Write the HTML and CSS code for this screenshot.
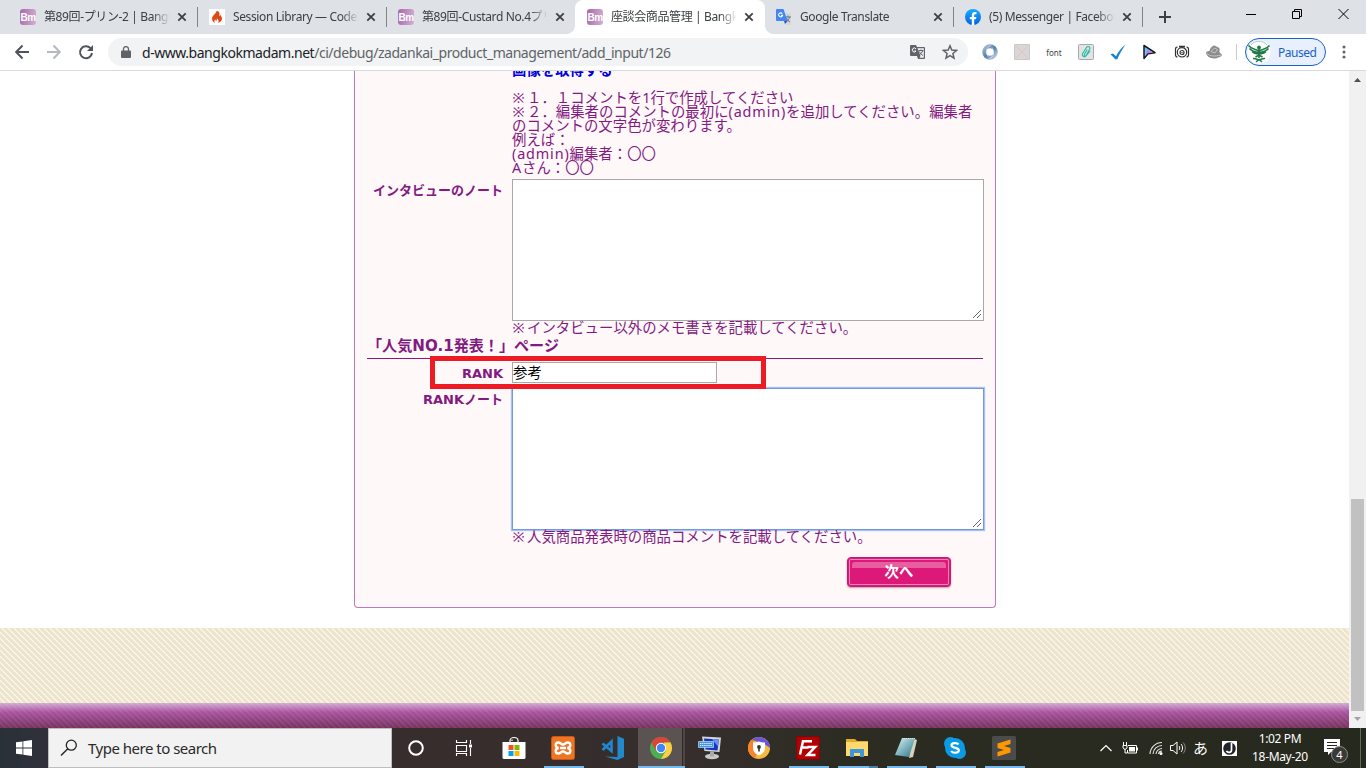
FILE: index.html
```html
<!DOCTYPE html>
<html lang="ja">
<head>
<meta charset="utf-8">
<title>座談会商品管理 | Bangkok Madam</title>
<link rel="stylesheet" href="styles.css">
</head>
<body>
<svg width="0" height="0" class="defs" aria-hidden="true">
  <defs>
    <linearGradient id="ring" x1="0" y1="0" x2="1" y2="1"><stop offset="0" stop-color="#a5bcd4"/><stop offset=".5" stop-color="#5480ac"/><stop offset="1" stop-color="#c3d2e2"/></linearGradient>
    <linearGradient id="fb" x1="0" y1="0" x2="0" y2="1"><stop offset="0" stop-color="#18acfe"/><stop offset="1" stop-color="#0163e0"/></linearGradient>
    <linearGradient id="pad" x1="0" y1="0" x2="1" y2="1"><stop offset="0" stop-color="#e2f4f7"/><stop offset=".5" stop-color="#7fb5c1"/><stop offset="1" stop-color="#317483"/></linearGradient>
    <symbol id="x" viewBox="0 0 10 10"><path d="M1.3 1.3l7.4 7.4M8.7 1.3L1.3 8.7" stroke="#3c4043" stroke-width="1.8"/></symbol>
  </defs>
</svg>

<header class="tabs">
  <div class="tab"><span class="fav bm">Bm</span><span class="title t1">第89回-プリン-2 | Bangkok</span><svg class="close"><use href="#x"/></svg></div>
  <div class="tab"><svg class="fav" viewBox="0 0 16 16"><path fill="#fff" d="M0 0h16v16H0z"/><path fill="#dd4814" d="M7.4 1.7c.6 2.4-3.9 4.200-4.300 7.500-.3 2.200 1.200 4 3.300 4.600-1.300-1-1.300-2.500-.1-3.500-.1 1 .3 1.400.9 1.500.9-.3.700-1.500.5-2.300 1.900.8 2.600 3 1.100 4.300 2.700-.6 4.300-2.200 4.200-4.300-.1-1.900-1.600-2.900-2-4.600-.3.800-.2 1.500 0 2.300-1.200-.4-.7-1.500-.5-2.500.2-1.500-1.200-2.700-3.100-3z"/></svg><span class="title t2">Session Library — CodeIgniter</span><svg class="close"><use href="#x"/></svg></div>
  <div class="tab"><span class="fav bm">Bm</span><span class="title t3">第89回-Custard No.4プリン</span><svg class="close"><use href="#x"/></svg></div>
  <div class="tab active"><span class="fav bm">Bm</span><span class="title t4">座談会商品管理 | Bangkok</span><svg class="close"><use href="#x"/></svg></div>
  <div class="tab"><svg class="fav" viewBox="0 0 16 16"><path fill="#d5d8dc" d="M6 4h9v12H9z"/><path d="M9 8h6M12 6.500v1.500M10 13c2-1 3-3 3.500-5M10.500 9c.7 2 2 3 3.500 4" stroke="#667380" fill="none"/><path fill="#4285f4" d="M1 0h6.500l4 12H1a1 1 0 0 1-1-1V1a1 1 0 0 1 1-1z"/><path fill="#3350c0" d="M8 12h3.500L9 15z"/><path d="M6.300 4.700A2 2 0 1 0 6.600 6.300H4.900" stroke="#fff" fill="none" stroke-width="1.100"/></svg><span class="title t5">Google Translate</span><svg class="close"><use href="#x"/></svg></div>
  <div class="tab"><svg class="fav" viewBox="0 0 16 16"><circle cx="8" cy="8" r="8" fill="url(#fb)"/><path fill="#fff" d="M6.800 15.900V10.300H4.800V8h2V6.200c0-2 1.200-3.100 3-3.100l1.700.1v2h-1c-1 0-1.300.6-1.300 1.200V8h2.200l-.4 2.300H9.200v5.600z"/></svg><span class="title t6">(5) Messenger | Facebook</span><svg class="close"><use href="#x"/></svg></div>
  <svg class="plus" viewBox="0 0 14 14"><path d="M7 1v12M1 7h12" stroke="#3c4043" stroke-width="2"/></svg>
  <svg class="winctl" viewBox="0 0 112 16"><g fill="none" stroke="#000"><path d="M6 8.500h10M52.500 5.500h7v7h-7zM54.500 5.500v-2h7v7h-2M98.500 3l10 10M108.500 3l-10 10"/></g></svg>
</header>

<div class="toolbar">
  <svg class="nav" viewBox="0 0 84 18"><g fill="none" stroke-width="2"><path stroke="#50545a" d="M14 9H1.500M7.500 2.500L1.200 9l6.300 6.500"/><path stroke="#b6b9bd" d="M32 9h12.500M38.500 2.500L44.800 9l-6.300 6.500"/><path stroke="#50545a" d="M75.500 5.200A6 6 0 1 0 77 10"/></g><path fill="#50545a" d="M78 2v6h-6z"/></svg>
  <div class="omni">
    <svg class="lock" viewBox="0 0 10 12"><path fill="#5f6368" d="M1 4.500h8a1 1 0 0 1 1 1V11a1 1 0 0 1-1 1H1a1 1 0 0 1-1-1V5.500a1 1 0 0 1 1-1z"/><path d="M2.500 5V3a2.500 2.400 0 0 1 5 0v2" fill="none" stroke="#5f6368" stroke-width="1.300"/></svg>
    <span class="url"><b>d-www.bangkokmadam.net</b>/ci/debug/zadankai_product_management/add_input/126</span>
    <svg class="trans" viewBox="0 0 15 14"><path fill="#606368" d="M1 0h5l1 2h7a1 1 0 0 1 1 1v10a1 1 0 0 1-1 1H8l-1-3H1a1 1 0 0 1-1-1V1a1 1 0 0 1 1-1z"/><path fill="#f1f3f4" d="M7.500 3.200h6.300v9.600H9.500l1-1.800z"/><path d="M6 4A2 2 0 1 0 6 6H4.300" stroke="#fff" fill="none"/><path d="M8.500 5.500h5M11 4.500v1M9 10c2-1 3-2.500 3.500-4M9.500 6.500c.7 2 2 3 3.500 4" stroke="#606368" fill="none"/></svg>
    <svg class="star" viewBox="0 0 16 16"><path d="M8 1.800l1.800 4.300 4.700.4-3.600 3 1.100 4.600-4-2.500-4 2.500 1.100-4.600-3.600-3 4.700-.4z" fill="none" stroke="#5f6368" stroke-width="1.500"/></svg>
  </div>
  <div class="exts">
    <svg viewBox="0 0 16 16"><circle cx="8" cy="8" r="5.800" fill="none" stroke="url(#ring)" stroke-width="4"/><path d="M9 1.500c-5 1-6 7-3 11M7 14.500c5-1 6-7 3-11" fill="none" stroke="#e0e8f0" stroke-width=".7"/></svg>
    <svg viewBox="0 0 16 16"><path fill="#d7d7d7" stroke="#c8c8c8" d="M.5.500h15v15H.500z"/><path d="M2 2l12 12M14 2L2 14" stroke="#eeb9b5" stroke-width=".8"/></svg>
    <span class="fonttxt">font</span>
    <svg viewBox="0 0 16 16"><rect x=".5" y=".5" width="15" height="15" rx="1" fill="#e3e3e3" stroke="#a9a9a9"/><path d="M4.600 9.500L8.500 3.500c1.300-2 4.300-.5 3.200 1.600L8.300 11.200c-.9 1.500-2.600.5-1.900-.9L9.200 5.500M4.600 9.500c-1.200 2.300 1.600 4.400 3.600 2.200L12.200 7" fill="none" stroke="#1fbfa5" stroke-width="1.100"/></svg>
    <svg viewBox="0 0 16 16"><path fill="#1684cf" d="M.5 10.200L3 9.500l3 2.700C8.500 7.500 11.500 3.500 15.500.700 12.500 5 9.500 9.500 7.300 15.300H5.200z"/></svg>
    <svg viewBox="0 0 16 16"><path d="M2 1.500v13L6 9.700l7-1z" fill="#65cdf5" stroke="#17171d" stroke-width="1.500" stroke-linejoin="round"/><path d="M5 5.500l6 3.200-5.500.5-2.500 3z" fill="#c47bea"/></svg>
    <svg viewBox="0 0 16 16"><g fill="none" stroke="#333" stroke-width="1.200"><path d="M3.500 3C1.500 3 1.500 4.200 1.500 5.200v5.600c0 1.500.5 2.200 2 2.200M12.500 3c2 0 2 1.200 2 2.200v5.600c0 1.500-.5 2.200-2 2.200"/><circle cx="8" cy="8.300" r="4.700"/><circle cx="8" cy="8.500" r="2"/></g><path fill="#333" d="M5 1.800h6v1.800H5zM7.400 7.900h1.200v1.200H7.400z"/></svg>
    <svg viewBox="0 0 16 16"><path fill="#8c8c8c" d="M0 8.500c1-1.500 3-1.500 3.500-1.500.5-3 3-5.500 5-5.500l4.500 2.200c1 .8.700 2.800.3 4.300l2.700 2.800c0 2-5 3.700-8 3.700-4 0-8-3-8-6z"/><path d="M5 7.500l3.500-3.500 3 1.500-2.500 3.500zM1 9.500c3 3 8 3 14 1.500" fill="none" stroke="#c5c5c5"/></svg>
  </div>
  <i class="divider"></i>
  <div class="profile"><svg viewBox="0 0 24 24"><circle cx="12" cy="12" r="11.500" fill="#fff"/><path d="M4 5c4-5 12-5 16 0" fill="none" stroke="#9cc7ad" stroke-width=".9"/><g fill="none" stroke="#1e7a45" stroke-width="1.500"><path d="M12 11C8 9 4 9 1.500 5.500M12 12.500C8 12 5 11.500 2.500 8.500M12 14c-3 0-5-.5-7-2.500M12 11c4-2 8-2 10.500-5.500M12 12.500c4-.5 7-1 9.500-4M12 14c3 0 5-.5 7-2.500M12 9v9M6 18.500c3-.5 4 1.500 6 1.500s3-2 6-1.500M9 22l3-2.500 3 2.500M8.500 17l3.500-2 3.500 2"/></g><circle cx="12" cy="7.500" r="1.900" fill="#1e7a45"/></svg><span>Paused</span></div>
  <svg class="dots" viewBox="0 0 4 14"><g fill="#5f6368"><circle cx="2" cy="2" r="1.500"/><circle cx="2" cy="7" r="1.500"/><circle cx="2" cy="12" r="1.500"/></g></svg>
</div>

<div class="viewport">
  <main class="page">
    <section class="panel">
      <div class="row first">
        <div class="label"></div>
        <div class="field notes">
          <a class="get">画像を取得する</a>
          <p><span class="kome">※</span>１．１コメントを1行で作成してください</p>
          <p><span class="kome">※</span>２．編集者のコメントの最初に<span class="latin">(admin)</span>を追加してください。編集者</p>
          <p>のコメントの文字色が変わります。</p>
          <p>例えば：</p>
          <p><span class="latin">(admin)</span>編集者：〇〇</p>
          <p><span class="latin">A</span>さん：〇〇</p>
        </div>
      </div>
      <div class="row">
        <div class="label">インタビューのノート</div>
        <div class="field"><div class="area"><svg class="grip" viewBox="0 0 10 10"><path d="M1 9l8-8M5 9l4-4" stroke="#666" fill="none"/></svg></div><p><span class="kome">※</span>インタビュー以外のメモ書きを記載してください。</p></div>
      </div>
      <h2>「人気NO.1発表！」ページ</h2>
      <div class="row rank">
        <div class="label">RANK</div>
        <div class="field"><div class="input">参考</div></div>
        <i class="mark"></i>
      </div>
      <div class="row">
        <div class="label">RANKノート</div>
        <div class="field"><div class="area focus"><svg class="grip" viewBox="0 0 10 10"><path d="M1 9l8-8M5 9l4-4" stroke="#666" fill="none"/></svg></div><p><span class="kome">※</span>人気商品発表時の商品コメントを記載してください。</p></div>
      </div>
      <div class="actions"><div class="btn"><span>次へ</span></div></div>
    </section>
    <div class="stripes"></div>
    <div class="foot"></div>
  </main>
  <aside class="scroll">
    <svg viewBox="0 0 17 17"><path fill="#505050" d="M5 11l3.500-4 3.500 4z"/></svg>
    <div class="track"><div class="thumb"></div></div>
    <svg viewBox="0 0 17 17"><path fill="#a3a3a3" d="M5 6l3.500 4 3.500-4z"/></svg>
  </aside>
</div>

<footer class="taskbar">
  <div class="start"><svg width="16" height="16" viewBox="0 0 16 16"><path fill="#fff" d="M0 2.300L6.500 1.400V7.500H0zM7.300 1.300L16 0v7.500H7.300zM0 8.400h6.500v6.200L0 13.700zM7.300 8.400H16V16l-8.700-1.200z"/></svg></div>
  <div class="search"><svg width="18" height="18" viewBox="0 0 18 18"><circle cx="11.300" cy="6.200" r="5" fill="none" stroke="#222" stroke-width="1.300"/><path d="M7.800 9.800L1 16.500" stroke="#222" stroke-width="1.400"/></svg><span>Type here to search</span></div>
  <div class="app cortana"><svg viewBox="0 0 24 24"><circle cx="12" cy="12" r="6.800" fill="none" stroke="#fff" stroke-width="2"/></svg></div>
  <div class="app"><svg viewBox="0 0 24 24"><g fill="none" stroke="#fff" stroke-width="1.100"><path d="M3.500 4v2.500h10V4M3.500 9.500h10v6h-10zM3.500 20v-2.500h10V20M17.500 4v4M17.500 12v8"/></g><path fill="#fff" d="M16 8.500h3v3h-3z"/></svg></div>
  <div class="app"><svg viewBox="0 0 24 24"><path fill="#fff" d="M.500 6h23v15.500a1.500 1.500 0 0 1-1.500 1.500H2a1.500 1.500 0 0 1-1.500-1.500z"/><path d="M8 7V4.500a4 3 0 0 1 8 0V7M10 5V3.500" fill="none" stroke="#fff" stroke-width="1.200"/><path fill="#f25022" d="M6.500 9h5v5h-5z"/><path fill="#7fba00" d="M12.500 9h5v5h-5z"/><path fill="#00a4ef" d="M6.500 15h5v5h-5z"/><path fill="#ffb900" d="M12.500 15h5v5h-5z"/></svg></div>
  <div class="app open"><svg viewBox="0 0 24 24"><rect x=".5" y=".5" width="23" height="23" rx="2" fill="#ed7524" stroke="#c75715"/><path d="M7.500 12C3.500 11 4 6.500 7.500 6.500c2 0 2.500 2 4.500 2s2.500-2 4.500-2c3.500 0 4 4.500 0 5.500 4 1 3.500 5.500 0 5.500-2 0-2.500-2-4.500-2s-2.500 2-4.500 2C4 17.500 3.500 13 7.500 12zM9 12h6" fill="none" stroke="#fff" stroke-width="2.400"/></svg></div>
  <div class="app"><svg viewBox="0 0 24 24"><path fill="#2489ca" d="M17.500 0L24 2.800V21l-6.500 3L5 20.500 17.500 21z"/><path d="M2.500 7.500L11.500 15V5.500L2.500 14" fill="none" stroke="#1e88d0" stroke-width="2.600"/></svg></div>
  <div class="app chrome"><svg viewBox="0 0 24 24"><circle cx="12" cy="12" r="11" fill="#4caf50"/><path fill="#db4437" d="M2.500 6.500A11 11 0 0 1 21.500 6.500H12v5.500l-5 3z"/><path fill="#ffcd40" d="M21.500 6.500A11 11 0 0 1 12 23l5-8.500-2-8z"/><circle cx="12" cy="12" r="5.200" fill="#fff"/><circle cx="12" cy="12" r="4.200" fill="#4285f4"/></svg></div>
  <div class="app"><svg viewBox="0 0 24 24"><path fill="#d5d5d5" d="M4 .5l19 1-1.500 14.500-15-1z"/><path fill="#1637bd" d="M6 2.500l15 1-1.500 11-12-1z"/><path fill="#6f90f0" d="M14 3l7 .5-1 7z"/><ellipse cx="14" cy="20.500" rx="7" ry="2.700" fill="#c9c9c9"/><path fill="#aaa" d="M12 15.500h4v5h-4z"/><path fill="#4695e0" stroke="#bfdcf5" stroke-width=".7" d="M.5 5.500h15v6H.500z"/><path d="M2 7.500h12M2 9.500h12" stroke="#e6f3ff" stroke-dasharray="1.300 .8"/></svg></div>
  <div class="app"><svg viewBox="0 0 24 24"><circle cx="12" cy="12" r="11" fill="#f6b83d"/><path fill="#f7842b" d="M1 12A11 11 0 0 1 5.500 3L10 18 8 22A11 11 0 0 1 1 12z"/><path fill="#6857d8" d="M4.500 4A11 11 0 0 1 23 12l-7-5z"/><path fill="#fff" d="M12 5.500c2 1 4 1 6 1v5.500c0 3.500-2.500 6-6 7.500-3.500-1.500-6-4-6-7.500V6.500c2 0 4 0 6-1z"/><circle cx="12" cy="11" r="1.900" fill="#333"/><path fill="#333" d="M11.200 11h1.600v4.500h-1.600z"/></svg></div>
  <div class="app open"><svg viewBox="0 0 24 24"><path fill="#b40000" stroke="#8e0000" stroke-dasharray="1.500 1" d="M.700.700h22.600v22.600H.700z"/><path fill="none" stroke="#fff" stroke-width="2.500" d="M4 18.500L7 5.200h9M5.500 11.500h7M11.500 11h7.700L11.500 19h8"/></svg></div>
  <div class="app open folder"><svg viewBox="0 0 24 24"><path fill="#e6a92b" d="M1 3h9l2 2H23v4H1z"/><path fill="#ffd86e" d="M1 6h22v14H1z"/><path fill="#3b98df" d="M5 13h14v8h-4v-4H9v4H5z"/></svg></div>
  <div class="app open"><svg viewBox="0 0 24 24"><path fill="#d8d2bd" d="M18 2l5 2-4 17-4 1z"/><path fill="url(#pad)" d="M8 2h13l-6 19-14-2z"/><path d="M8 2.500h13" stroke="#d9e4e5" stroke-dasharray="1 1"/></svg></div>
  <div class="app open"><svg viewBox="0 0 24 24"><g fill="#0a9be4"><circle cx="7.500" cy="7.500" r="6.500"/><circle cx="16.500" cy="16.500" r="6.500"/><circle cx="12" cy="12" r="10"/></g><path d="M15.500 8.500c-1.500-2-7-1.700-7 .8 0 3.500 7.300 1.700 7.300 5 0 3-6 3.200-7.600.7" fill="none" stroke="#fff" stroke-width="2.200"/></svg></div>
  <div class="app open"><svg viewBox="0 0 24 24"><rect width="24" height="24" rx="1.500" fill="#4b4b4b"/><path fill="#ff9800" d="M5.500 7.500L18.500 3.500v4.500l-6.500 2 6.500 2v4.500L5.500 20.500V16l6.500-2-6.500-2z"/></svg></div>
  <div class="tray">
    <svg class="chev" viewBox="0 0 12 8"><path d="M.5 7L6 1.500 11.500 7" fill="none" stroke="#fff" stroke-width="1.200"/></svg>
    <svg class="batt" viewBox="0 0 16 13"><path d="M6 3.500h8.500v7.500h-9V8M1.500 0v3M4.500 0v3M1 3.500h4V6L3 7.500 1 6zM3 7v4h2" fill="none" stroke="#fff"/><path fill="#fff" d="M7 5h6v4.500H7zM15 5.500h1v3h-1z"/></svg>
    <svg class="wifi" viewBox="0 0 14 14"><g fill="none" stroke="#e8e8e8" stroke-width="1.100"><path d="M1 13A12 12 0 0 1 13 1.500M4 13a9 9 0 0 1 9-8.500M7 13a6 6 0 0 1 6-5.500M9.500 13A3.500 3.500 0 0 1 13 10"/></g><circle cx="12" cy="12.500" r="1.500" fill="#fff"/></svg>
    <svg class="vol" viewBox="0 0 16 14"><path d="M.5 4.500H3L7 1v12L3 9.500H.5z" fill="none" stroke="#fff"/><path d="M9 5c1 1 1 3 0 4M11 3c2 2 2 6 0 8" fill="none" stroke="#fff"/><path d="M13 1.500c3 3 3 8 0 11" fill="none" stroke="#888"/></svg>
    <span class="ime">あ</span>
    <svg class="jp" viewBox="0 0 15 15"><path fill="#fff" d="M0 0h15v15H0z"/><circle cx="7.500" cy="7.500" r="6.300" fill="#20242a"/><path d="M9.500 2v7c0 3-4 3-5 .8" stroke="#fff" fill="none" stroke-width="1.700"/></svg>
    <div class="clock"><span class="time">1:02 PM</span><span class="date">18-May-20</span></div>
    <div class="notif"><svg viewBox="0 0 16 16"><path fill="#fff" d="M0 0h16v13H7l-3 3v-3H0z"/><path d="M3 3.500h10M3 6.500h10M3 9.500h7" stroke="#25271d"/></svg><span class="count">4</span></div>
    <i class="peek"></i>
  </div>
</footer>
</body>
</html>
```
FILE: styles.css
```css
* { box-sizing: border-box; }
body { margin: 0; width: 1366px; height: 768px; overflow: hidden; display: flex; flex-direction: column; background: #fff; font-family: "Noto Sans", "Noto Sans CJK JP", sans-serif; }
p, h2 { margin: 0; white-space: nowrap; }
svg { display: block; flex: none; }
.defs { position: absolute; }

/* Tab strip */
.tabs { height: 34px; flex: none; display: flex; background: #dee1e6; padding-left: 9px; }
.tab { width: 189px; flex: none; height: 34px; padding: 0 10px 0 11px; display: flex; align-items: center; border-right: 1px solid transparent; background: linear-gradient(#808388, #808388) right 7px / 1px 20px no-repeat border-box; }
.tab:nth-child(3) { background: none; }
.tab.active { background: #fff; border-radius: 8px 8px 0 0; border: 0; position: relative; width: 190px; margin-left: -1px; padding: 0 11px 0 12px; }
.tab.active::before, .tab.active::after { content: ""; position: absolute; bottom: 0; width: 8px; height: 8px; }
.tab.active::before { left: -8px; background: radial-gradient(circle at 0 0, transparent 7.5px, #fff 8px); }
.tab.active::after { right: -8px; background: radial-gradient(circle at 100% 0, transparent 7.5px, #fff 8px); }
.fav { width: 16px; height: 16px; flex: none; }
.bm { background: linear-gradient(100deg, #a868ab, #d3b0d3); border-radius: 3px; color: #fff; font: bold 10px/18px "Liberation Sans", sans-serif; text-align: center; letter-spacing: -.5px; overflow: hidden; }
.title { margin-left: 8px; width: 126px; height: 20px; font-size: 12px; line-height: 20px; color: #3c4043; white-space: nowrap; overflow: hidden; -webkit-mask-image: linear-gradient(90deg, #000 108px, transparent 126px); mask-image: linear-gradient(90deg, #000 108px, transparent 126px); letter-spacing: -.38px; }
.close { width: 10px; height: 10px; margin-left: auto; }
.plus { width: 14px; height: 14px; margin: 10px 0 0 15px; }
.winctl { width: 112px; height: 16px; margin: 6px 0 0 68px; }

/* Toolbar */
.toolbar { height: 37px; flex: none; display: flex; align-items: center; border-bottom: 1px solid #d8dadd; background: #fff; }
.nav { width: 84px; height: 18px; margin-left: 15px; }
.omni { margin-left: 9px; width: 860px; height: 28px; border-radius: 14px; background: #f1f3f4; display: flex; align-items: center; padding: 0 10px 0 13px; }
.lock { width: 10px; height: 12px; }
.url { margin-left: 11px; font-size: 14px; letter-spacing: -.46px; color: #5f6368; white-space: nowrap; }
.url b { font-weight: 400; color: #202124; }
.trans { width: 15px; height: 14px; margin-left: auto; margin-right: 17px; }
.star { width: 16px; height: 16px; }
.exts { display: flex; align-items: center; gap: 16px; margin-left: 14px; }
.exts svg { width: 16px; height: 16px; }
.fonttxt { width: 16px; display: flex; justify-content: center; font-size: 8px; color: #444; }
.divider { width: 1px; height: 16px; background: #c9cbcf; margin-left: 14px; }
.profile { width: 81px; height: 28px; margin-left: 8px; border: 1px solid #1a60c8; border-radius: 14px; background: #e8f0fe; display: flex; align-items: center; padding-left: 1px; }
.profile svg { width: 24px; height: 24px; }
.profile span { margin-left: 7px; font-size: 12px; letter-spacing: -.5px; color: #1a5fc9; }
.dots { width: 4px; height: 14px; margin-left: 16px; }

/* Page */
.viewport { height: 657px; flex: none; display: flex; overflow: hidden; }
.page { width: 1349px; height: 657px; display: flex; flex-direction: column; overflow: hidden; }
.panel { width: 642px; height: 537px; flex: none; margin-left: 354px; margin-bottom: 20px; border: 1px solid #bf78bd; border-top: 0; border-radius: 0 0 4px 4px; background: #fff8f8; padding: 0 12px; color: #821a82; }
.row { display: flex; gap: 9px; position: relative; }
.label { width: 136px; flex: none; text-align: right; font: bold 13px/14px "DejaVu Sans", "Noto Sans CJK JP", sans-serif; padding-top: 5px; white-space: nowrap; }
.field { width: 472px; flex: none; }
.field p { font: 14.4px/14px "Noto Sans", "Noto Sans CJK JP", sans-serif; height: 14px; }
.kome { padding: 0 2.500px 0 .5px; }
.latin { letter-spacing: .85px; }
.notes { height: 108px; }
.get { display: block; margin: -9px 0 15px; height: 14px; font: bold 14.4px/14px "Noto Sans CJK JP", sans-serif; color: #00d; }
.area { width: 472px; height: 142px; background: #fff; border: 1px solid #a9a9a9; display: flex; justify-content: flex-end; align-items: flex-end; padding: 1px; }
.area.focus { border-color: #7398e0; box-shadow: 0 0 1px 1px #a6c2f5; }
.grip { width: 10px; height: 10px; }
h2 { height: 24px; border-bottom: 1px solid #821a82; font: bold 15.1px/22px "DejaVu Sans", "Noto Sans CJK JP", sans-serif; }
.rank { height: 29px; padding-top: 3px; }
.input { width: 205px; height: 21px; background: #fff; border: 1px solid #a9a9a9; font: 14.4px/17px "Noto Sans CJK JP", sans-serif; color: #000; }
.mark { position: absolute; z-index: 2; left: 63px; top: -3px; width: 336px; height: 33px; border: 5px solid #ed1c24; }
.actions { display: flex; justify-content: flex-end; padding: 13px 32px 0 0; }
.btn { width: 104px; height: 30px; border-radius: 4px; background: #dc1878; border: 1px solid #c91770; box-shadow: inset 0 0 0 1px #dc1878, inset 0 0 0 2px #ee87b9, 0 1px 2px #b9a4ae; padding: 4px; }
.btn span { display: block; height: 20px; color: #fff; text-align: center; font: bold 14.4px/18px "Noto Sans CJK JP", sans-serif; background: linear-gradient(#e75fa1, #e75fa1) 0 0 / 100% 6px no-repeat; border-radius: 3px 3px 0 0; }
.stripes { height: 75px; flex: none; background: repeating-linear-gradient(45deg, #ece4cc 0 2.600px, #fdfaf2 3.100px 3.700px, #ece4cc 4.243px); }
.foot { height: 25px; flex: none; background: repeating-linear-gradient(45deg, transparent 0 3px, rgba(255,255,255,.07) 3.3px 4.243px), linear-gradient(#d5acd2, #a9559f 9px, #77335f); }
.scroll { width: 17px; background: #f1f1f1; display: flex; flex-direction: column; align-items: center; }
.scroll svg { width: 17px; height: 17px; }
.track { flex: 1; width: 13px; }
.thumb { margin-top: 411px; height: 212px; background: #c1c1c1; }

/* Taskbar */
.taskbar { height: 40px; flex: none; display: flex; color: #fff; background: linear-gradient(90deg, #293138, #30303a 48px, #372d2c 392px, #352e2c 700px, #2c2c22 850px, #26291d); }
.start { width: 48px; flex: none; display: flex; align-items: center; justify-content: center; }
.search { width: 344px; flex: none; background: #f2f2f2; border: 1px solid #bdbdbd; display: flex; align-items: center; padding-left: 11px; }
.search span { margin-left: 10px; font-size: 15px; letter-spacing: -.5px; color: #2a2a2a; white-space: nowrap; }
.app { width: 49px; flex: none; display: flex; align-items: center; justify-content: center; }
.app.cortana { width: 48px; }
.app svg { width: 24px; height: 24px; position: relative; left: .5px; }
.app.cortana svg { left: 0; }
.app.open { background: linear-gradient(#76b9ed, #76b9ed) 6px bottom / 40px 2px no-repeat; }
.app.folder { background: linear-gradient(90deg, #76b9ed 31px, #4e7da3 31px) 6px bottom / 40px 2px no-repeat; }
.app.chrome { background: linear-gradient(#76b9ed, #76b9ed) 2px bottom / 47px 2px no-repeat, linear-gradient(90deg, #5b5351 44px, #302a29 44px 45px, #4d4644 45px) 2px 0 / 47px 40px no-repeat; }
.tray { margin-left: auto; display: flex; align-items: center; width: 266px; flex: none; }
.chev { width: 12px; height: 8px; }
.batt { width: 16px; height: 13px; margin-left: 10px; }
.wifi { width: 14px; height: 14px; margin-left: 11px; }
.vol { width: 16px; height: 14px; margin-left: 7px; }
.ime { margin-left: 7px; width: 16px; font: 15px/20px "Noto Sans CJK JP", sans-serif; }
.jp { width: 15px; height: 15px; margin-left: 13px; }
.clock { margin-left: 14px; width: 58px; display: flex; flex-direction: column; align-items: center; font-size: 12px; line-height: 18px; white-space: nowrap; letter-spacing: -.35px; }
.notif { margin-left: 15px; width: 24px; height: 24px; position: relative; padding-top: 3px; }
.notif svg { width: 16px; height: 16px; }
.count { position: absolute; left: 7px; top: 10px; width: 17px; height: 17px; border: 1px solid #8d8e8a; border-radius: 50%; background: #393a36; font-size: 11px; line-height: 15px; text-align: center; }
.peek { width: 1px; height: 40px; background: #66675f; margin-left: 12px; }
```
